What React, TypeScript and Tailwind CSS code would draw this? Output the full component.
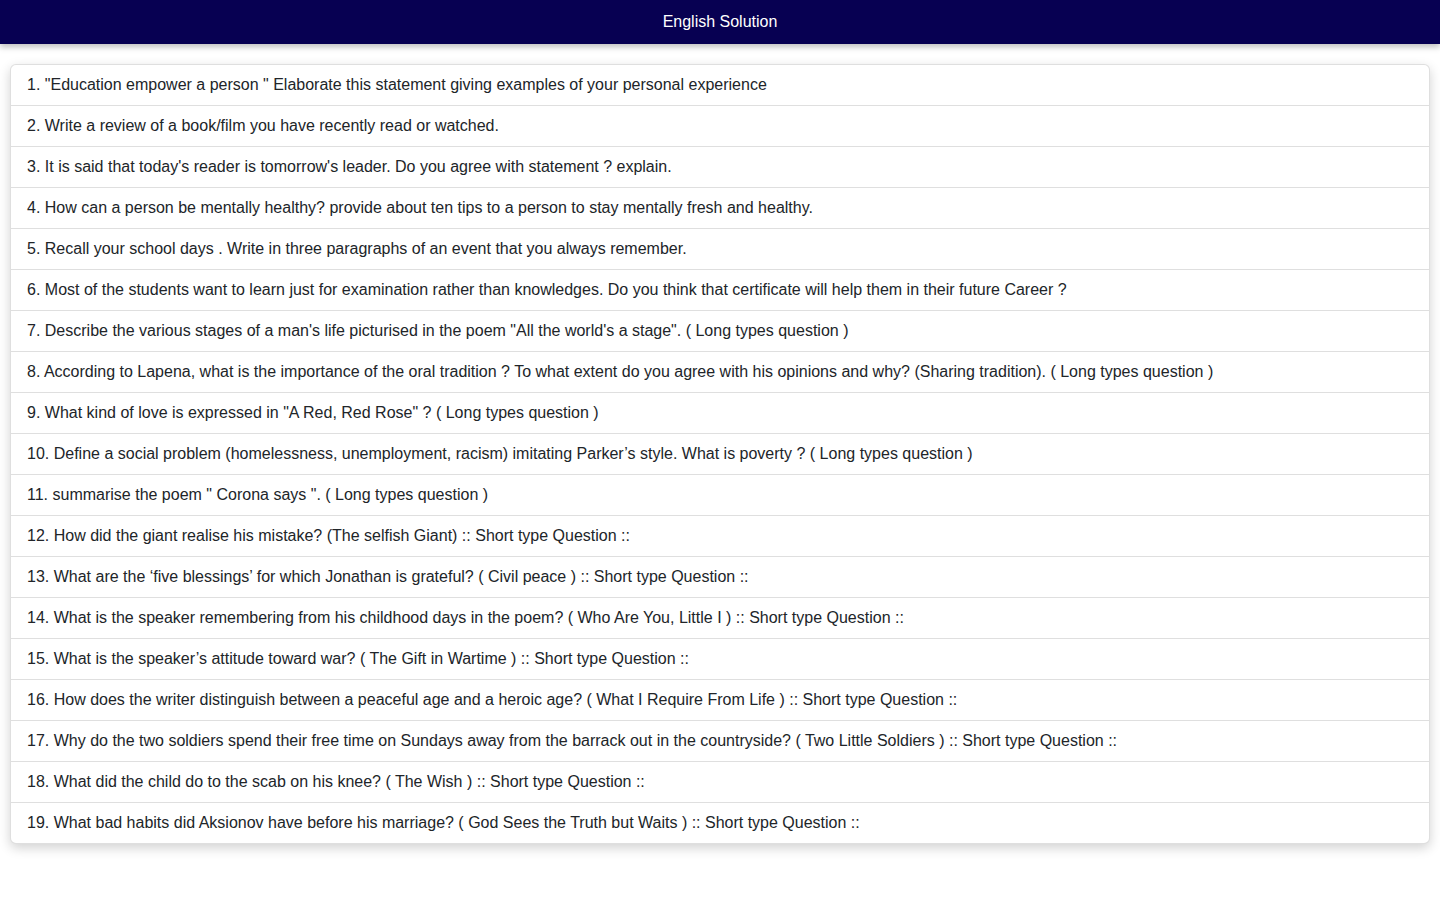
const questions = [
	`"Education empower a person " Elaborate this statement giving examples of your personal experience`,
	"Write a review of a book/film you have recently read or watched.",
	"It is said that today's reader is tomorrow's leader. Do you agree with statement ? explain.",
	"How can a person be mentally healthy? provide about ten tips to a person to stay mentally fresh and healthy.",
	"Recall your school days . Write in three paragraphs of an event that you always remember.",
	"Most of the students want to learn just for examination rather than knowledges. Do you think that certificate will help them in their future Career ?",
	`Describe the various stages of a man's life picturised in the poem "All the world's a stage". ( Long types question )`,
	"According to Lapena, what is the importance of the oral tradition ? To what extent do you agree with his opinions and why? (Sharing tradition). ( Long types question )",
	`What kind of love is expressed in "A Red, Red Rose" ? ( Long types question )`,
	"Define a social problem (homelessness, unemployment, racism) imitating Parker\u2019s style. What is poverty ? ( Long types question )",
	`summarise the poem " Corona says ". ( Long types question )`,
	"How did the giant realise his mistake? (The selfish Giant) :: Short type Question ::",
	"What are the \u2018five blessings\u2019 for which Jonathan is grateful? ( Civil peace ) :: Short type Question ::",
	"What is the speaker remembering from his childhood days in the poem? ( Who Are You, Little I ) :: Short type Question ::",
	"What is the speaker\u2019s attitude toward war? ( The Gift in Wartime ) :: Short type Question ::",
	"How does the writer distinguish between a peaceful age and a heroic age? ( What I Require From Life ) :: Short type Question ::",
	"Why do the two soldiers spend their free time on Sundays away from the barrack out in the countryside? ( Two Little Soldiers ) :: Short type Question ::",
	"What did the child do to the scab on his knee? ( The Wish ) :: Short type Question ::",
	"What bad habits did Aksionov have before his marriage? ( God Sees the Truth but Waits ) :: Short type Question ::",
];

export default function App() {
	return (
		<div className="min-h-screen bg-white font-['Liberation_Sans',Arial,sans-serif] text-[16px] leading-6 text-[#212529]">
			{/* Top bar */}
			<header className="bg-[#070052] py-[10px] text-center text-white shadow-[0_3px_6px_rgba(0,0,0,0.25)]">
				English Solution
			</header>

			<div className="mx-[10px] mt-[20px]">
				<ul className="overflow-hidden rounded-[6px] border border-[rgba(0,0,0,0.125)] bg-white shadow-[0_4px_12px_rgba(0,0,0,0.18)]">
					{questions.map((q, i) => (
						<li
							key={i}
							className="border-b border-[rgba(0,0,0,0.125)] px-4 py-2 last:border-b-0"
						>
							{i + 1}. {q}
						</li>
					))}
				</ul>
			</div>
		</div>
	);
}
